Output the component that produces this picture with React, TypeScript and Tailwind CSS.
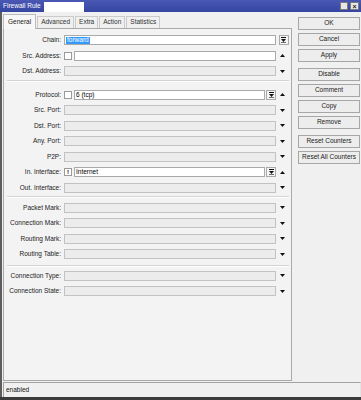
import React from 'react';

const Up = () => (
  <svg width="5" height="3" viewBox="0 0 5 3">
    <path d="M0 3L2.5 0L5 3Z" fill="#111" />
  </svg>
);

const Down = () => (
  <svg width="5" height="3" viewBox="0 0 5 3">
    <path d="M0 0L5 0L2.5 3Z" fill="#111" />
  </svg>
);

// combobox button: bar over a small down triangle
const DropBtn = () => (
  <div className="flex h-[10px] w-[10px] shrink-0 items-center justify-center border border-[#a9a9a9] bg-[#f4f4f4]">
    <svg width="5" height="6" viewBox="0 0 5 6">
      <path d="M0 0.5H5" stroke="#111" strokeWidth="1" />
      <path d="M0 2L5 2L2.5 5Z" fill="#111" />
      <path d="M0 5.5H5" stroke="#111" strokeWidth="0.6" />
    </svg>
  </div>
);

const Check = ({ bang }: { bang?: boolean }) => (
  <div className="mr-[2px] flex h-[8px] w-[8px] shrink-0 items-center justify-center self-center border border-[#9a9a9a] bg-white text-[6px] leading-none font-bold text-black">
    {bang ? '!' : ''}
  </div>
);

const Gray = () => <div className="h-full flex-1 border border-[#c2c2c2] bg-[#ececec]" />;

const White = ({ children }: { children?: React.ReactNode }) => (
  <div className="flex h-full flex-1 items-center border border-[#a9a9a9] bg-white pl-[1px] text-black">{children}</div>
);

function Row({ label, children, arrow }: { label: string; children: React.ReactNode; arrow?: React.ReactNode }) {
  return (
    <div className="flex h-[15.5px] items-center">
      <div className="w-[56px] shrink-0 text-right text-[#222]">{label}</div>
      <div className="ml-[3px] flex h-[10px] w-[212px]">{children}</div>
      <div className="flex w-[13px] justify-center">{arrow}</div>
    </div>
  );
}

const Sep = ({ cls }: { cls: string }) => <div className={`mx-[2px] border-t border-b border-t-[#d4d4d4] border-b-white ${cls}`} />;

const Btn = ({ label, cls = '' }: { label: string; cls?: string }) => (
  <div className={`flex h-[13px] w-[62px] items-center justify-center border border-[#a6a6a6] bg-[#ededed] text-[#222] ${cls}`}>
    {label}
  </div>
);

export default function App() {
  const tabs = ['Advanced', 'Extra', 'Action', 'Statistics'];
  return (
    <div className="flex h-[400px] w-[361px] flex-col bg-[#f0f0f0] text-[6.5px] leading-none font-['Liberation_Sans',Arial,sans-serif]">
      {/* title bar */}
      <div className="flex h-[12px] shrink-0 items-center bg-gradient-to-b from-[#4a58b4] to-[#3745a2] pl-[3px] pr-[2px] text-white">
        <span>Firewall Rule</span>
        <div className="ml-[3px] h-[10px] w-[40px] self-end bg-white" />
        <div className="ml-auto flex gap-[2px]">
          <div className="h-[8px] w-[8px] border border-[#7b7b7b] bg-[#e8e8e8]" />
          <div className="flex h-[8px] w-[9px] items-center justify-center border border-[#7b7b7b] bg-[#e8e8e8] text-[7px] font-bold text-[#222]">×</div>
        </div>
      </div>

      {/* body */}
      <div className="flex min-h-0 flex-1 border-l-2 border-[#5d5d5d] pl-[1px]">
        <div className="flex w-[289px] flex-col pt-[2px] pb-[1px]">
          <div className="flex h-[14px] items-end">
            <div className="relative z-10 -mb-px flex h-[15px] items-center border border-b-0 border-[#bcbcbc] bg-[#f7f7f7] px-[4px] text-[#222]">
              General
            </div>
            {tabs.map((t) => (
              <div key={t} className="ml-[1px] flex h-[12px] items-center border border-b-0 border-[#cbcbcb] bg-[#f0f0f0] px-[3px] text-[#333]">
                {t}
              </div>
            ))}
          </div>
          <div className="flex flex-1 flex-col border border-[#a9a9a9] bg-[#f3f3f3] pt-[3.5px] pl-[1px]">
            <Row label="Chain:" arrow={<div className="ml-[2px]"><DropBtn /></div>}>
              <White>
                <span className="bg-[#3399ff] px-px text-white">forward</span>
              </White>
            </Row>
            <Row label="Src. Address:" arrow={<Up />}>
              <Check />
              <White />
            </Row>
            <Row label="Dst. Address:" arrow={<Down />}>
              <Gray />
            </Row>
            <Sep cls="mt-[0.5px] mb-[5.5px]" />
            <Row label="Protocol:" arrow={<Up />}>
              <Check />
              <White>6 (tcp)</White>
              <div className="ml-[1px]"><DropBtn /></div>
            </Row>
            <Row label="Src. Port:" arrow={<Down />}><Gray /></Row>
            <Row label="Dst. Port:" arrow={<Down />}><Gray /></Row>
            <Row label="Any. Port:" arrow={<Down />}><Gray /></Row>
            <Row label="P2P:" arrow={<Down />}><Gray /></Row>
            <Row label="In. Interface:" arrow={<Up />}>
              <Check bang />
              <White>Internet</White>
              <div className="ml-[1px]"><DropBtn /></div>
            </Row>
            <Row label="Out. Interface:" arrow={<Down />}><Gray /></Row>
            <Sep cls="mt-[0.5px] mb-[2px]" />
            <Row label="Packet Mark:" arrow={<Down />}><Gray /></Row>
            <Row label="Connection Mark:" arrow={<Down />}><Gray /></Row>
            <Row label="Routing Mark:" arrow={<Down />}><Gray /></Row>
            <Row label="Routing Table:" arrow={<Down />}><Gray /></Row>
            <Sep cls="mt-[2.5px] mb-[1.5px]" />
            <Row label="Connection Type:" arrow={<Down />}><Gray /></Row>
            <Row label="Connection State:" arrow={<Down />}><Gray /></Row>
          </div>
        </div>

        {/* buttons */}
        <div className="ml-[6px] flex flex-col pt-[5px]">
          <Btn label="OK" />
          <Btn label="Cancel" cls="mt-[3px]" />
          <Btn label="Apply" cls="mt-[3px]" />
          <Btn label="Disable" cls="mt-[6px]" />
          <Btn label="Comment" cls="mt-[3px]" />
          <Btn label="Copy" cls="mt-[3px]" />
          <Btn label="Remove" cls="mt-[3px]" />
          <Btn label="Reset Counters" cls="mt-[6px]" />
          <Btn label="Reset All Counters" cls="mt-[3px]" />
        </div>
      </div>

      {/* status bar */}
      <div className="flex h-[18px] shrink-0 flex-col border-l-2 border-[#5d5d5d] pl-[1px]">
        <div className="flex h-[15px] items-center border-t border-l border-[#a3a3a3] border-r border-r-[#e4e4e4] bg-[#f0f0f0] pl-[2px] text-[#111]">
          enabled
        </div>
        <div className="-ml-[3px] h-[3px] bg-[#3b3b3b]" />
      </div>
    </div>
  );
}
